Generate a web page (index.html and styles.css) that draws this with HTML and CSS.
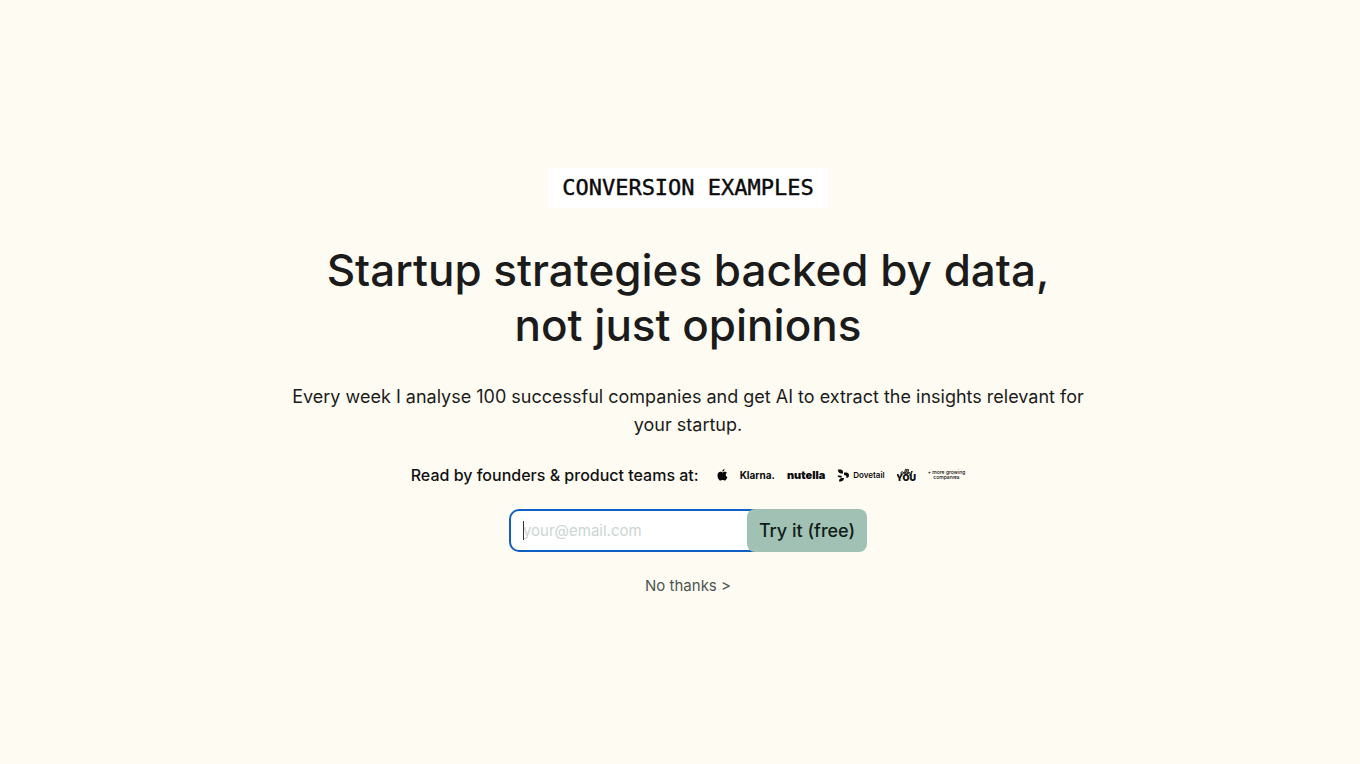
FILE: index.html
```html
<!DOCTYPE html>
<html lang="en">
<head>
<meta charset="utf-8">
<meta name="viewport" content="width=device-width, initial-scale=1">
<title>Conversion Examples</title>
<link rel="stylesheet" href="styles.css">
</head>
<body>
<main class="welcome">
  <div class="brand">CONVERSION EXAMPLES</div>
  <h1 class="title">Startup strategies backed by data,<br>not just opinions</h1>
  <p class="intro">Every week I analyse 100 successful companies and get AI to extract the insights relevant for your startup.</p>
  <div class="readers">
    <span class="readers-label">Read by founders &amp; product teams at:</span>
    <div class="logos">
      <svg class="apple" viewBox="0 0 20 24" role="img" aria-label="Apple"><path d="M14 0c.2 2.800-2 5.200-4.500 5.200C9.200 2.700 11.400.3 14 0zM10.200 6.800c1.100 0 2.500-1.300 4.600-1.300 1.800 0 3.300.9 4.200 2.200-3.700 2.200-3.200 7.200.8 8.700-.9 2.500-2.900 6.600-5.300 6.600-1.600 0-2.200-1-4.200-1s-2.700 1-4.200 1C3.200 23 0 17.500 0 12.800c0-4.600 2.800-7.200 5.800-7.200 2 0 3.400 1.200 4.400 1.200z"/></svg>
      <span class="klarna">Klarna.</span>
      <span class="nutella">nutella</span>
      <span class="dovetail">
        <svg class="dovetail-mark" viewBox="0 0 24 26" aria-hidden="true"><path d="M2 1h5a5 5 0 0 1 5 5v3H9A7 7 0 0 1 2 3zM14 7h4a6 6 0 0 1 6 6c0 3-2 5-5 5 0-4-1-6-5-6zM1 13h5a4 4 0 0 1 4 4H6a5 5 0 0 1-5-4zM4 25c0-4 2-7 6-7h4c0 4-3 7-7 7z"/></svg>
        <span>Dovetail</span>
      </span>
      <svg class="ally" viewBox="0 0 19 14" role="img" aria-label="Ally You"><path class="ally-script" d="M6 4c-2-1-3 2-1 2 1 0 2-1 2-2-1 1 0 2 1 1s2-4 1-4-2 5 0 5 3-5 2-5-2 5 0 5l1-2c0 2 2 2 3-1 0 3-2 4-3 4"/><text class="ally-you" x="9" y="13" text-anchor="middle">YOU</text></svg>
      <span class="more">+ more growing<br>companies</span>
    </div>
  </div>
  <form class="signup">
    <div class="field">
      <input class="email" type="email" aria-label="Email address" placeholder="your@email.com">
      <span class="caret"></span>
    </div>
    <button class="submit" type="submit">Try it (free)</button>
  </form>
  <a class="skip" href="#">No thanks &gt;</a>
</main>
</body>
</html>
```
FILE: styles.css
```css
* { box-sizing: border-box; }

body {
  margin: 0;
  background: #fefbf3;
  color: #1c1b1b;
  font-family: Inter, "Liberation Sans", sans-serif;
}

.welcome {
  min-height: 100vh;
  padding-left: 16px;
  display: flex;
  flex-direction: column;
  align-items: center;
  justify-content: center;
}

.brand {
  padding: 0 14px;
  background: #fff;
  color: #0b0b0b;
  font: 22px/40px "DejaVu Sans Mono", monospace;
  -webkit-text-stroke: 0.4px #0b0b0b;
}

.title {
  margin: 35px 0 30px;
  font-size: 44px;
  line-height: 55px;
  font-weight: 500;
  text-align: center;
}

.intro {
  width: 100%;
  max-width: 800px;
  margin: 0;
  font-size: 18px;
  line-height: 28px;
  text-align: center;
}

.readers {
  height: 24px;
  margin: 24px 0 22px;
  display: flex;
  align-items: center;
  gap: 18px;
}

.readers-label {
  font-size: 16px;
  font-weight: 500;
  color: #111;
}

.logos {
  display: flex;
  align-items: center;
  gap: 12px;
  color: #0a0a0a;
  white-space: nowrap;
}

.logos svg { fill: currentColor; }
.apple { width: 11px; height: 12px; }
.klarna { font-size: 10px; font-weight: 700; }
.nutella { font: 900 12px/14px Inter, sans-serif; font-size: 11px; }
.dovetail { display: flex; align-items: center; gap: 4px; font-size: 8px; font-weight: 600; }
.dovetail-mark { width: 12px; height: 13px; }

.ally { width: 19px; height: 14px; }
.ally-script { fill: none; stroke: currentColor; stroke-width: 1; }
.ally-you { font: 900 9px Inter, sans-serif; }

.more { font-size: 5px; line-height: 5px; font-weight: 500; text-align: center; }

.signup { display: flex; }

.field { position: relative; }

.email {
  display: block;
  width: 262px;
  height: 43px;
  padding: 0 12px;
  border: 2px solid #1060c4;
  border-radius: 10px;
  outline: 0;
  background: #fff;
  font: 15px Inter, sans-serif;
}

.email::placeholder { color: #cbd6d1; opacity: 1; }

.caret {
  position: absolute;
  left: 14px;
  top: 12px;
  width: 1px;
  height: 19px;
  background: #333;
}

.submit {
  position: relative;
  margin-left: -24px;
  height: 43px;
  padding: 0 12px;
  border: 0;
  border-radius: 8px;
  background: #a0c1b3;
  color: #101c17;
  font: 500 18px Inter, sans-serif;
}

.skip {
  margin-top: 24px;
  color: #4b5652;
  font-size: 15px;
  line-height: 20px;
  text-decoration: none;
}
```
